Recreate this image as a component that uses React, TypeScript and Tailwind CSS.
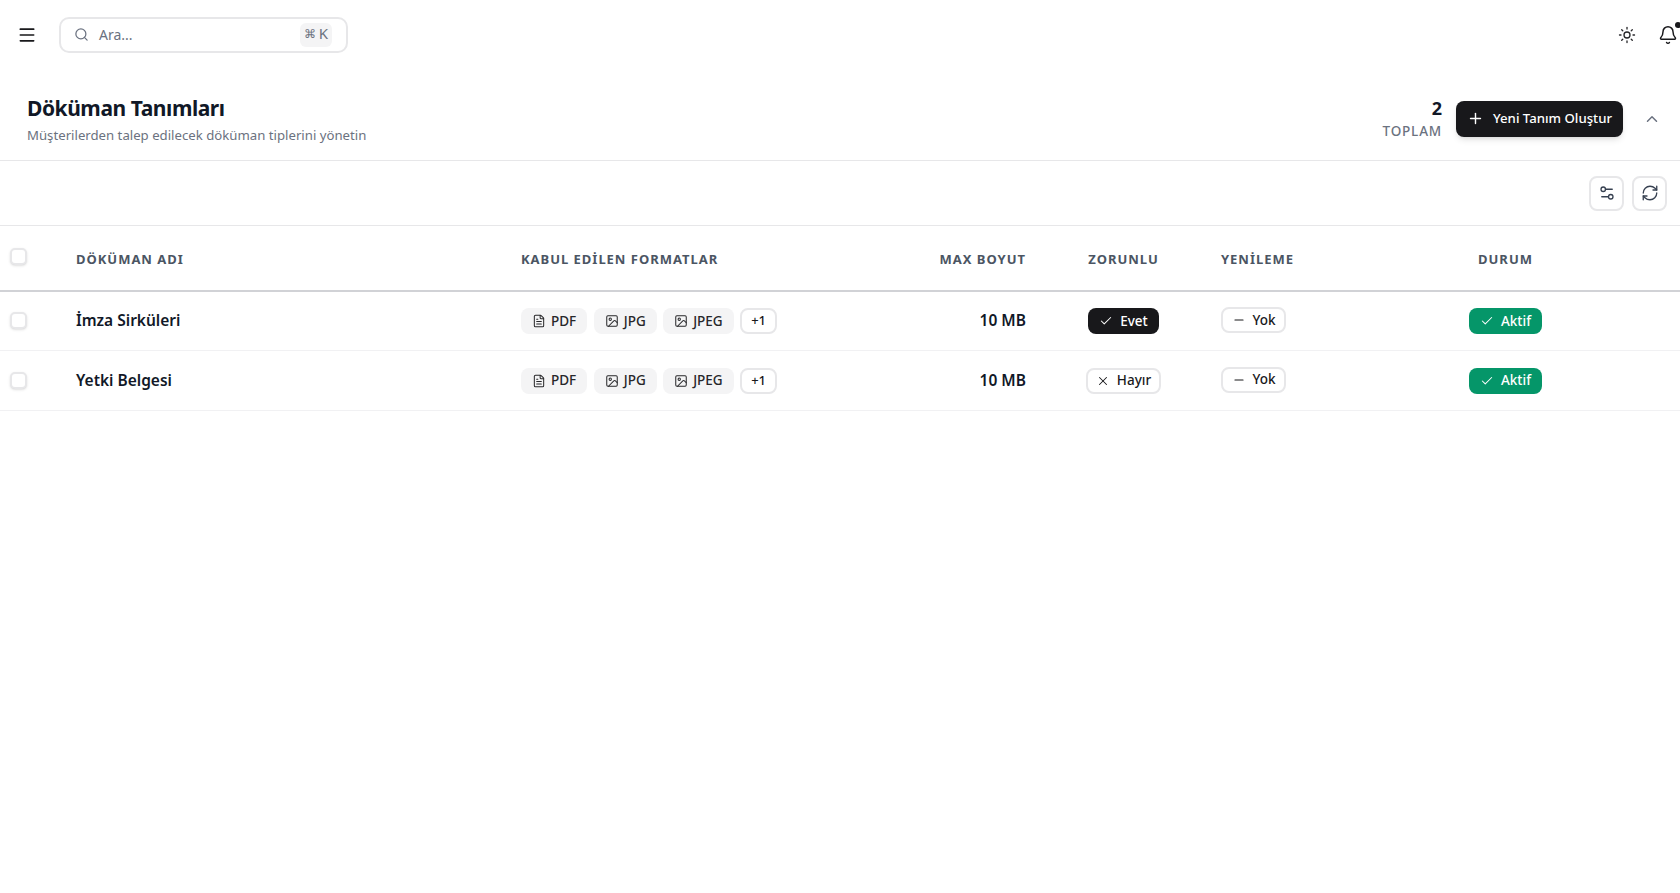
import React from 'react';
import { Bell, Check, ChevronUp, FileText, Image, Menu, Minus, Plus, RefreshCw, Search, Settings2, Sun, X } from 'lucide-react';

const FormatChip = ({ kind, label }: { kind: 'file' | 'image'; label: string }) => {
  const Icon = kind === 'file' ? FileText : Image;
  return (
    <span className="inline-flex h-[26px] items-center gap-[5px] rounded-lg bg-[#f4f4f5] px-[11px] text-[13.5px] font-medium text-[#27272a]">
      <Icon className="h-[14px] w-[14px]" strokeWidth={1.75} />
      {label}
    </span>
  );
};

const Formats = () => (
  <div className="flex items-center gap-[6.5px]">
    <FormatChip kind="file" label="PDF" />
    <FormatChip kind="image" label="JPG" />
    <FormatChip kind="image" label="JPEG" />
    <span className="inline-flex h-[26px] items-center rounded-lg border-2 border-[#e7e7e9] bg-white px-[9px] text-[13px] font-medium text-[#18181b]">
      +1
    </span>
  </div>
);

const Checkbox = () => (
  <span className="block h-[17px] w-[17px] rounded-[5px] border-2 border-[#e7e7e9] bg-white shadow-sm" />
);

const Badge = ({ className, children }: { className: string; children: React.ReactNode }) => (
  <span className={`inline-flex h-[26px] items-center gap-[7px] rounded-lg text-[13.5px] font-medium ${className}`}>
    {children}
  </span>
);

const rows = [
  { name: 'İmza Sirküleri', required: true },
  { name: 'Yetki Belgesi', required: false },
];

const headClass = 'px-4 pt-[4px] text-[13px] font-bold tracking-[0.075em] text-[#4b5563]';

export default function App() {
  return (
    <div className="min-h-[893px] w-full overflow-hidden bg-white font-['Noto_Sans',sans-serif] text-[#111827]">
      <header className="flex h-[69px] items-center pl-[17px]">
        <Menu className="h-5 w-5 text-[#18181b]" />
        <div className="ml-[22px] flex h-[36px] w-[289px] items-center rounded-[10px] border-2 border-[#e7e7e9] bg-white pl-[13px] pr-[14px]">
          <Search className="h-[15px] w-[15px] text-[#6b7280]" />
          <span className="ml-[10px] flex-1 text-[14px] text-[#6b7280]">Ara...</span>
          <span className="flex h-[24px] items-center gap-[3px] rounded-md bg-[#f4f4f5] px-[4px] pb-[2px] text-[15px] leading-none text-[#6b7280]">
            <span className="text-[12px]">⌘</span>K
          </span>
        </div>
        <div className="ml-auto flex items-center gap-[22px]">
          <Sun className="h-[18px] w-[18px] text-[#27272a]" strokeWidth={1.75} />
          <div className="relative mr-[2px]">
            <Bell className="h-5 w-5 text-[#18181b]" strokeWidth={1.75} />
            <span className="absolute -right-[3px] -top-[3px] h-[6px] w-[6px] rounded-full bg-[#18181b]" />
          </div>
        </div>
      </header>

      <section className="flex h-[92px] items-center border-b border-[#e7e7e9] pl-[27px] pr-[21px] pt-[8px]">
        <div className="mt-[2px] flex-1">
          <h1 className="text-[21px] font-bold leading-[28px] tracking-[-0.45px] text-[#111827]">Döküman Tanımları</h1>
          <p className="mt-[3px] text-[13.2px] leading-[20px] text-[#6b7280]">Müşterilerden talep edilecek döküman tiplerini yönetin</p>
        </div>
        <div className="mr-[14px] mt-[4px] text-right">
          <div className="text-[18px] font-bold leading-[21px] text-[#111827]">2</div>
          <div className="text-[13.5px] font-medium leading-[24px] tracking-[0.06em] text-[#6b7280]">TOPLAM</div>
        </div>
        <button className="flex h-[36px] w-[167px] items-center justify-center gap-[9px] rounded-lg bg-[#18181b] text-[13.2px] font-medium text-white shadow-md">
          <Plus className="h-[17px] w-[17px]" />
          Yeni Tanım Oluştur
        </button>
        <ChevronUp className="ml-[20px] mr-[-2px] h-[18px] w-[18px] text-[#6b7280]" />
      </section>

      <div className="flex h-[65px] items-center justify-end gap-2 border-b border-[#e7e7e9] pr-[13px]">
        <button className="flex h-[35px] w-[35px] items-center justify-center rounded-lg border-2 border-[#e7e7e9] bg-white text-[#374151]">
          <Settings2 className="h-[18px] w-[18px]" strokeWidth={1.75} />
        </button>
        <button className="flex h-[35px] w-[35px] items-center justify-center rounded-lg border-2 border-[#e7e7e9] bg-white text-[#374151]">
          <RefreshCw className="h-[18px] w-[18px]" strokeWidth={1.75} />
        </button>
      </div>

      <table className="w-full table-fixed border-collapse">
        <colgroup>
          <col className="w-[60px]" />
          <col className="w-[445px]" />
          <col className="w-[386px]" />
          <col className="w-[151px]" />
          <col className="w-[163px]" />
          <col className="w-[126px]" />
          <col />
        </colgroup>
        <thead>
          <tr className="h-[64.5px] border-b-2 border-[#d1d2d6]">
            <th className="pb-[3px] pl-[10px]"><Checkbox /></th>
            <th className={`${headClass} text-left`}>DÖKÜMAN ADI</th>
            <th className={`${headClass} text-left`}>KABUL EDİLEN FORMATLAR</th>
            <th className={`${headClass} text-right`}>MAX BOYUT</th>
            <th className={`${headClass} text-center`}>ZORUNLU</th>
            <th className={`${headClass} text-left`}>YENİLEME</th>
            <th className={`${headClass} text-center`}>DURUM</th>
          </tr>
        </thead>
        <tbody>
          {rows.map((row) => (
            <tr key={row.name} className="h-[60px] border-b border-[#f1f1f3]">
              <td className="pl-[10px]"><Checkbox /></td>
              <td className="px-4 text-[15.5px] font-semibold text-[#111827]">{row.name}</td>
              <td className="px-4"><Formats /></td>
              <td className="px-4 text-right text-[15.5px] font-semibold text-[#111827]">10 MB</td>
              <td className="px-4 text-center">
                {row.required ? (
                  <Badge className="bg-[#18181b] px-[11.5px] text-white">
                    <Check className="h-[14px] w-[14px]" strokeWidth={1.75} />
                    Evet
                  </Badge>
                ) : (
                  <Badge className="border-2 border-[#e7e7e9] bg-white px-[8px] text-[#18181b]">
                    <X className="h-[14px] w-[14px]" strokeWidth={1.75} />
                    Hayır
                  </Badge>
                )}
              </td>
              <td className="px-4">
                <Badge className="mb-[2px] border-2 border-[#e7e7e9] bg-white px-[8.5px] text-[#18181b]">
                  <Minus className="h-[14px] w-[14px]" strokeWidth={1.75} />
                  Yok
                </Badge>
              </td>
              <td className="px-4 text-center">
                <Badge className="bg-[#059669] px-[11px] text-white">
                  <Check className="h-[14px] w-[14px]" strokeWidth={1.75} />
                  Aktif
                </Badge>
              </td>
            </tr>
          ))}
        </tbody>
      </table>
    </div>
  );
}
